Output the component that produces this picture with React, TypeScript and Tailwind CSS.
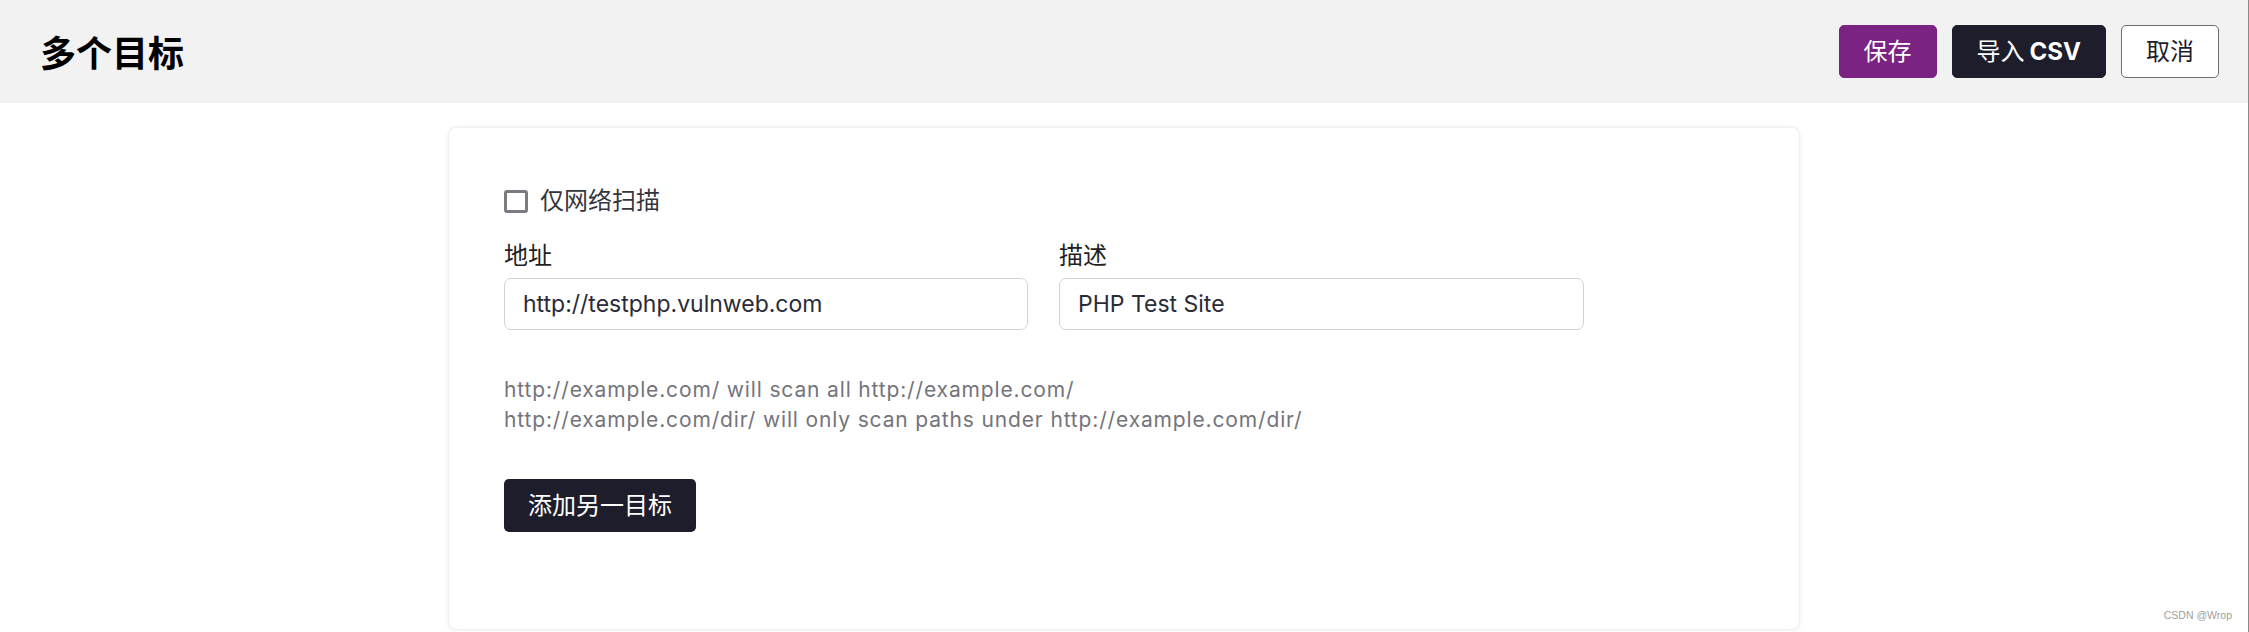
import React from "react";

const font = { fontFamily: '"Inter", "Noto Sans CJK SC", sans-serif' };

function HeaderButton({ children, variant }: { children: React.ReactNode; variant: "primary" | "dark" | "outline" }) {
  const styles = {
    primary: "bg-[#7b2382] text-white border-[#7b2382]",
    dark: "bg-[#1e1d2b] text-white border-[#1e1d2b]",
    outline: "bg-white text-[#1e1d2b] border-[#6b6b73]",
  }[variant];
  return (
    <button className={`h-[53px] px-[24px] rounded-[5px] border text-[24px] leading-none flex items-center ${styles}`}>
      {children}
    </button>
  );
}

function Field({ label, value, width }: { label: string; value: string; width: string }) {
  return (
    <div className={`flex flex-col ${width}`}>
      <label className="text-[24px] leading-[36px] text-[#1f1f24] mb-[4px]">{label}</label>
      <input
        readOnly
        value={value}
        className="h-[52px] w-full rounded-[7px] border border-[#d4d4d8] px-[18px] text-[23px] text-[#2b2b38] outline-none"
      />
    </div>
  );
}

export default function App() {
  return (
    <div className="relative h-[632px] overflow-hidden bg-white border-r border-[#8a8a8a]" style={font}>
      {/* header */}
      <header className="h-[103px] bg-[#f2f2f2] flex items-center justify-between pl-[40px] pr-[29px]">
        <h1 className="text-[36px] font-bold text-black leading-none mt-[4px]">多个目标</h1>
        <div className="flex gap-[15px]">
          <HeaderButton variant="primary">保存</HeaderButton>
          <HeaderButton variant="dark">
            导入 <span className="font-bold ml-[5px]">CSV</span>
          </HeaderButton>
          <HeaderButton variant="outline">取消</HeaderButton>
        </div>
      </header>

      {/* card */}
      <main className="flex justify-center pt-[24px]">
        <div className="w-[1352px] bg-white rounded-[8px] shadow-[0_0_4px_rgba(0,0,0,0.08)] border border-[#f0f0f0] px-[55px] pt-[55px] pb-[97px]">
          <label className="flex items-center gap-[12px] h-[36px]">
            <span className="w-[24px] h-[23px] rounded-[3px] border-[3px] border-[#7b7b83] bg-white" />
            <span className="text-[24px] text-[#35353d]">仅网络扫描</span>
          </label>

          <div className="flex gap-[31px] mt-[19px]">
            <Field label="地址" value="http://testphp.vulnweb.com" width="w-[524px]" />
            <Field label="描述" value="PHP Test Site" width="w-[525px]" />
          </div>

          <div className="mt-[45px] text-[21px] leading-[30px] tracking-[0.85px] text-[#74747c]">
            <div>http://example.com/ will scan all http://example.com/</div>
            <div>http://example.com/dir/ will only scan paths under http://example.com/dir/</div>
          </div>

          <button className="mt-[44px] h-[53px] px-[24px] rounded-[5px] bg-[#1e1d2b] text-white text-[24px] leading-none">
            添加另一目标
          </button>
        </div>
      </main>

      <div
        className="absolute right-[16px] bottom-[8px] text-[10.5px] text-[#a0a0a0]"
        style={{ fontFamily: '"Liberation Sans", sans-serif' }}
      >
        CSDN @Wrop
      </div>
    </div>
  );
}
